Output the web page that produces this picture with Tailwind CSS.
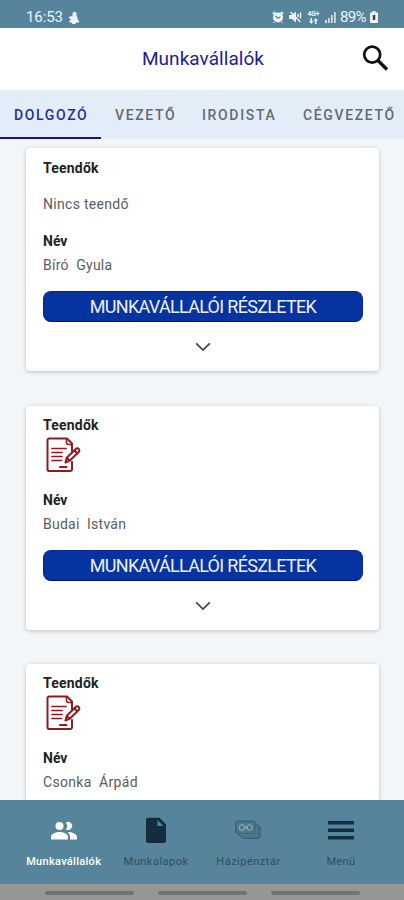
<!DOCTYPE html>
<html lang="hu">
<head>
<meta charset="utf-8">
<meta name="viewport" content="width=device-width, initial-scale=1">
<title>Munkavállalók</title>
<script src="https://cdn.jsdelivr.net/npm/@tailwindcss/browser@4"></script>
</head>
<body class="flex h-[900px] w-[404px] flex-col overflow-hidden bg-[#f2f6f8] font-['Roboto','Liberation_Sans',sans-serif]">
<svg class="hidden">
  <symbol id="doc" viewBox="0 0 36 36">
    <g fill="none" stroke="#8f1a20" stroke-width="2" stroke-linejoin="round" stroke-linecap="round">
      <path d="M27 25v7.200a1.800 1.800 0 0 1-1.800 1.800H4.300a1.800 1.800 0 0 1-1.800-1.800V3.300A1.800 1.800 0 0 1 4.300 1.500H22L27 6.500v8"/>
      <path d="M21.500 2v3.500q0 2 2 2h3" stroke-width="1.600"/>
      <path d="M7 11.500h14M7 15.500h10M7 19.500h10M7 23.500h9.500" stroke-width="1.700"/>
      <path d="M15 30h6.500" stroke-width="2"/>
      <path d="M20.500 25.500l1.200-4.800 9-8.700a2 2 0 0 1 3 0 2 2 0 0 1 0 3l-9 8.700zM29.500 13.500l3 3M21.700 20.700l3 3"/>
    </g>
  </symbol>
  <symbol id="chev" viewBox="0 0 16 10"><path d="M1.200 1.300l6.800 6.700 6.800-6.700" fill="none" stroke="#444" stroke-width="1.700"/></symbol>
</svg>

<div class="flex h-[28px] shrink-0 items-center bg-[#56849b] pt-[6px] pr-[26px] pl-[26px] text-[15px] leading-none text-[#edf3f6]">
  <span class="w-[37px] tracking-[-0.1px]">16:53</span>
  <svg class="ml-[5px] h-[13px] w-[12px]" viewBox="0 0 12 13" fill="#edf3f6"><path d="M4.500 2L6.500.500l2 1.500v3l1 1.500V8.500L11 9.500v2H8.500L7 13H4.500L3.500 11.500H2L1 10l2-1.500L.500 6.500 3 5l1.500.500z"/></svg>
  <svg class="ml-auto h-[12px] w-[12px] shrink-0" viewBox="0 0 12 12"><circle cx="6" cy="6.500" r="5" fill="#edf3f6"/><path d="M.800 3.200L3.200 1M11.200 3.200L8.800 1M2.500 11.500l-1 .5M9.500 11.500l1 .5" stroke="#edf3f6" stroke-width="1.800"/><path d="M3.500 5l2.500 2.300 2.500-1.500" fill="none" stroke="#56849b" stroke-width="1.300"/></svg>
  <svg class="ml-[5px] h-[12px] w-[13px] shrink-0" viewBox="0 0 13 12"><path d="M0 4h3l4-3.500v11L3 8H0z" fill="#edf3f6"/><path d="M1.500 1l10 10M9 3v3M11.500 1.500v6" stroke="#edf3f6" stroke-width="1.400"/></svg>
  <div class="ml-[5px] flex w-[13px] shrink-0 flex-col items-center">
    <span class="h-[7px] text-[7px] leading-[7px] font-bold tracking-[-0.2px]">4G+</span>
    <svg class="h-[6px] w-[9px]" viewBox="0 0 9 6" fill="#edf3f6"><path d="M1.500 0h1.500v3H4.500L2.250 6 0 3h1.500zM6 6h1.500V3H9L6.750 0 4.500 3H6z"/></svg>
  </div>
  <svg class="ml-[5px] h-[12px] w-[11px] shrink-0" viewBox="0 0 11 12" fill="#edf3f6"><path d="M0 9h2v3H0zM3 7h1.800v5H3zM6 4h1.800v8H6zM9 1h1.800v11H9z" opacity=".8"/></svg>
  <span class="ml-[4px] w-[28px] tracking-[-0.7px]">89%</span>
  <svg class="ml-[2px] h-[12px] w-[8px] shrink-0" viewBox="0 0 8 12"><path d="M2.500 0h3v1.500H7a1 1 0 0 1 1 1V11a1 1 0 0 1-1 1H1a1 1 0 0 1-1-1V2.500a1 1 0 0 1 1-1h1.500z" fill="#edf3f6"/><path d="M4 4v5" stroke="#28485a" stroke-width="2.500"/></svg>
</div>

<header class="grid h-[62px] shrink-0 grid-cols-[60px_1fr_60px] items-center bg-white">
  <span></span>
  <h1 class="-mt-[2px] pl-[2px] text-center text-[19px] leading-none tracking-[0.05px] text-[#20209a]">Munkavállalók</h1>
  <svg class="-mt-[3px] ml-[17px] h-[28px] w-[28px]" viewBox="0 0 28 28" fill="none" stroke="#111"><circle cx="11.200" cy="10.600" r="8" stroke-width="2.700"/><path d="M17 16.500l9 9" stroke-width="3.300"/></svg>
</header>

<nav class="flex h-[49px] shrink-0 bg-[#e3edf7] text-[14px] leading-[50px] font-medium tracking-[1.650px] whitespace-nowrap text-[#636a72]">
  <a class="h-[49px] w-[101px] border-b-2 border-[#14148c] pl-[14px] text-[#20309c]">DOLGOZÓ</a>
  <a class="w-[88px] pl-[14px]">VEZETŐ</a>
  <a class="w-[100px] pl-[13px]">IRODISTA</a>
  <a class="w-[115px] pl-[14px]">CÉGVEZETŐ</a>
</nav>

<main class="flex min-h-0 flex-1 flex-col overflow-hidden px-[26px] pt-[9px] text-[14px] leading-[20px] text-[#5c5c5c]">
  <article class="flex h-[223px] w-[353px] shrink-0 flex-col rounded-[4px] bg-white px-[17px] pt-[10px] shadow-[0_1px_4px_rgba(0,0,0,0.22)]">
    <h2 class="font-bold tracking-[0.2px] text-[#222]">Teendők</h2>
    <p class="mt-[16px] tracking-[0.3px]">Nincs teendő</p>
    <h2 class="mt-[17px] font-bold text-[#222]">Név</h2>
    <p class="mt-[4px] tracking-[0.25px] whitespace-pre">Bíró  Gyula</p>
    <button class="mt-[16px] h-[31px] w-[320px] shrink-0 rounded-[8px] border border-[#0a229a] border-b-[#060a80] bg-[#0533a0] text-[18px] leading-none tracking-[-0.7px] text-[#eef0fc]">MUNKAVÁLLALÓI RÉSZLETEK</button>
    <svg class="mt-[20px] h-[10px] w-[16px] self-center"><use href="#chev"/></svg>
  </article>
  <article class="mt-[35px] flex h-[224px] w-[353px] shrink-0 flex-col rounded-[4px] bg-white px-[17px] pt-[9px] shadow-[0_1px_4px_rgba(0,0,0,0.22)]">
    <h2 class="font-bold tracking-[0.2px] text-[#222]">Teendők</h2>
    <svg class="mt-[2px] ml-[2px] h-[36px] w-[36px] shrink-0"><use href="#doc"/></svg>
    <h2 class="mt-[17px] font-bold text-[#222]">Név</h2>
    <p class="mt-[4px] tracking-[0.25px] whitespace-pre">Budai  István</p>
    <button class="mt-[16px] h-[31px] w-[320px] shrink-0 rounded-[8px] border border-[#0a229a] border-b-[#060a80] bg-[#0533a0] text-[18px] leading-none tracking-[-0.7px] text-[#eef0fc]">MUNKAVÁLLALÓI RÉSZLETEK</button>
    <svg class="mt-[20px] h-[10px] w-[16px] self-center"><use href="#chev"/></svg>
  </article>
  <article class="mt-[34px] flex h-[224px] w-[353px] shrink-0 flex-col rounded-[4px] bg-white px-[17px] pt-[9px] shadow-[0_1px_4px_rgba(0,0,0,0.22)]">
    <h2 class="font-bold tracking-[0.2px] text-[#222]">Teendők</h2>
    <svg class="mt-[2px] ml-[2px] h-[36px] w-[36px] shrink-0"><use href="#doc"/></svg>
    <h2 class="mt-[17px] font-bold text-[#222]">Név</h2>
    <p class="mt-[4px] tracking-[0.3px] whitespace-pre">Csonka  Árpád</p>
  </article>
</main>

<footer class="grid h-[84px] shrink-0 grid-cols-[repeat(4,92.4px)] bg-[#56849b] pl-[17.500px] text-[11px] leading-[14px] tracking-[0.3px] text-[#2b5064]">
  <div class="flex flex-col items-center pt-[17px] font-medium text-white">
    <svg class="h-[28px] w-[28px]" viewBox="0 0 28 28" fill="#fff"><circle cx="9.500" cy="9" r="4"/><path d="M1 22.500v-2.500c0-3.500 5-5 8.500-5s8.500 1.500 8.500 5v2.500z"/><path d="M15.800 12.200a4.800 4.800 0 0 0 0-6.500A4 4 0 1 1 15.800 12.200zM18 15c4 0 9 2 9 5v2.500h-7V20c0-2-1-3.800-2.500-5z"/></svg>
    <span class="mt-[10px]">Munkavállalók</span>
  </div>
  <div class="flex flex-col items-center pt-[17px]">
    <svg class="h-[28px] w-[20px]" viewBox="0 0 20 28"><path d="M2 .800h11.500l6.500 6.500V24a2 2 0 0 1-2 2H2a2 2 0 0 1-2-2V2.800a2 2 0 0 1 2-2zM11.500 3v6h6z" fill="#122d3e" fill-rule="evenodd"/></svg>
    <span class="mt-[10px] tracking-[0.5px]">Munkalapok</span>
  </div>
  <div class="flex flex-col items-center pt-[17px]">
    <svg class="h-[28px] w-[28px]" viewBox="0 0 28 28" fill="none" stroke="#39647a"><path d="M3 4h17l6.500 7v8.500l-2 2H9.500L1.500 15V5.500z" fill="#4c788e"/><rect x="2" y="4.500" width="19" height="12" rx="3"/><path d="M3.500 17l5.500 4h15.500V9.500M22 7.500l4.500 5"/><circle cx="8" cy="10.500" r="2.800" stroke="#94b6c5"/><circle cx="15.500" cy="10.500" r="2.800" stroke="#94b6c5"/><path d="M10 10.500h4" stroke="#94b6c5"/></svg>
    <span class="mt-[10px] tracking-[0.5px]">Házipénztár</span>
  </div>
  <div class="flex flex-col items-center pt-[17px]">
    <svg class="h-[28px] w-[26px]" viewBox="0 0 26 28" fill="#122d46"><path d="M0 4h26v3.500H0zM0 11.500h26V15H0zM0 19h26v3.500H0z"/></svg>
    <span class="mt-[10px]">Menü</span>
  </div>
</footer>
<div class="flex h-[16px] shrink-0 items-center gap-[24px] bg-[#969696] pt-[2px] pl-[45px]">
  <i class="h-[4px] w-[89px] rounded-full bg-[#737373]"></i>
  <i class="h-[4px] w-[89px] rounded-full bg-[#737373]"></i>
  <i class="h-[4px] w-[89px] rounded-full bg-[#737373]"></i>
</div>
</body>
</html>
